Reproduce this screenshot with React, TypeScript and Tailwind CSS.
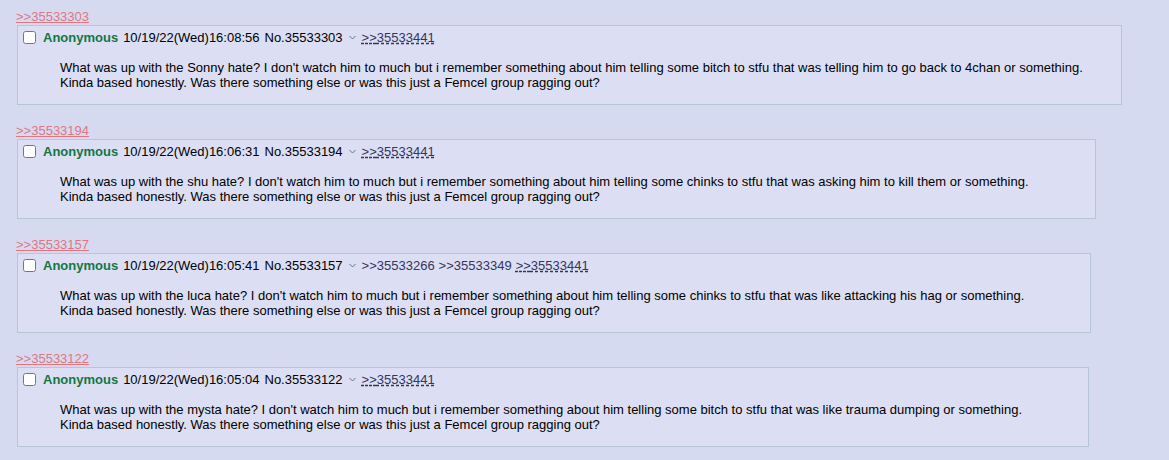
const posts = [
  {
    id: "35533303",
    time: "10/19/22(Wed)16:08:56",
    width: "w-[1105px]",
    backlinks: ["35533441"],
    lines: [
      "What was up with the Sonny hate? I don't watch him to much but i remember something about him telling some bitch to stfu that was telling him to go back to 4chan or something.",
      "Kinda based honestly. Was there something else or was this just a Femcel group ragging out?",
    ],
  },
  {
    id: "35533194",
    time: "10/19/22(Wed)16:06:31",
    width: "w-[1079px]",
    backlinks: ["35533441"],
    lines: [
      "What was up with the shu hate? I don't watch him to much but i remember something about him telling some chinks to stfu that was asking him to kill them or something.",
      "Kinda based honestly. Was there something else or was this just a Femcel group ragging out?",
    ],
  },
  {
    id: "35533157",
    time: "10/19/22(Wed)16:05:41",
    width: "w-[1074px]",
    backlinks: ["35533266", "35533349", "35533441"],
    lines: [
      "What was up with the luca hate? I don't watch him to much but i remember something about him telling some chinks to stfu that was like attacking his hag or something.",
      "Kinda based honestly. Was there something else or was this just a Femcel group ragging out?",
    ],
  },
  {
    id: "35533122",
    time: "10/19/22(Wed)16:05:04",
    width: "w-[1072px]",
    backlinks: ["35533441"],
    lines: [
      "What was up with the mysta hate? I don't watch him to much but i remember something about him telling some bitch to stfu that was like trauma dumping or something.",
      "Kinda based honestly. Was there something else or was this just a Femcel group ragging out?",
    ],
  },
];

function MenuArrow() {
  return (
    <svg width="7" height="5" viewBox="0 0 7 5" className="mx-[6px] inline-block align-middle">
      <path d="M0.5 1 L3.5 4 L6.5 1" fill="none" stroke="#6b7089" strokeWidth="1" />
    </svg>
  );
}

export default function App() {
  return (
    <div className="min-h-[460px] bg-[#d6daf0] px-[16px] pt-[9px] font-['Liberation_Sans',Arial,sans-serif] text-[13px] leading-[15px] text-black">
      {posts.map((post) => (
        <div key={post.id} className="mb-[18px]">
          {/* quoted-by link */}
          <div className="h-[15px]">
            <a className="cursor-pointer text-[#e07681] underline decoration-[#e07681]">
              &gt;&gt;{post.id}
            </a>
          </div>

          {/* post */}
          <div className={`ml-[1px] mt-[1px] ${post.width} border border-[#b7c5d9] bg-[#dcdff3] p-[2px]`}>
            <div className="flex h-[18px] items-center whitespace-nowrap">
              <input type="checkbox" className="m-0 ml-[3px] mr-[7px] h-[13px] w-[13px]" />
              <span className="font-bold text-[#117743]">Anonymous</span>
              <span className="ml-[5px]">{post.time}</span>
              <span className="ml-[5px]">No.{post.id}</span>
              <MenuArrow />
              {post.backlinks.map((b, i) => {
                const last = i === post.backlinks.length - 1;
                return (
                  <a
                    key={b}
                    className={
                      last
                        ? "cursor-pointer text-[#34345c] underline decoration-dashed decoration-[#34345c]"
                        : "mr-[4px] cursor-pointer text-[#34345c]"
                    }
                  >
                    &gt;&gt;{b}
                  </a>
                );
              })}
            </div>
            <blockquote className="mx-[40px] mb-[12px] mt-[14px] whitespace-nowrap">
              {post.lines[0]}
              <br />
              {post.lines[1]}
            </blockquote>
          </div>
        </div>
      ))}
    </div>
  );
}
